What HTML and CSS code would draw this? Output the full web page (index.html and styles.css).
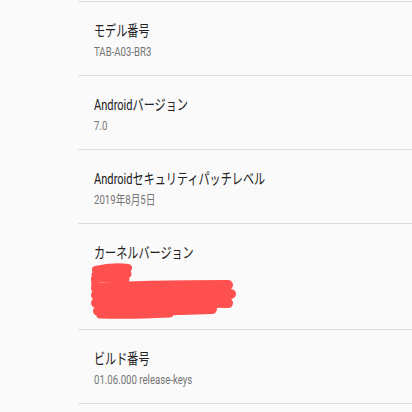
FILE: index.html
```html
<!DOCTYPE html>
<html lang="ja">
<head>
<meta charset="utf-8">
<link rel="stylesheet" href="styles.css">
</head>
<body>
<div class="list">
  <div class="row">
    <div class="title"><span>モデル番号</span></div>
    <div class="sub"><span>TAB-A03-BR3</span></div>
  </div>
  <div class="row">
    <div class="title"><span>Androidバージョン</span></div>
    <div class="sub"><span>7.0</span></div>
  </div>
  <div class="row">
    <div class="title"><span>Androidセキュリティパッチレベル</span></div>
    <div class="sub"><span>2019年8月5日</span></div>
  </div>
  <div class="row kernel">
    <div class="title"><span>カーネルバージョン</span></div>
    <svg class="scribble" width="146" height="60" viewBox="0 0 146 60">
      <g fill="none" stroke="#ff5050" stroke-linecap="round" stroke-linejoin="round">
        <path d="M6 7 C18 4 30 4 38 5" stroke-width="8"/>
        <path d="M5 12 L38 11 L6 16 L36 16" stroke-width="7"/>
        <path d="M5 16 L6 28" stroke-width="8"/>
        <path d="M6 25 C50 22 100 22 138 22" stroke-width="10"/>
        <path d="M6 32 C50 30 100 30 141 31" stroke-width="10"/>
        <path d="M6 40 C50 39 100 39 138 40" stroke-width="10"/>
        <path d="M8 48 C50 48 90 47 122 46" stroke-width="10"/>
        <path d="M10 52 C40 53 60 52 80 51" stroke-width="7"/>
      </g>
    </svg>
  </div>
  <div class="row last">
    <div class="title"><span>ビルド番号</span></div>
    <div class="sub"><span>01.06.000 release-keys</span></div>
  </div>
</div>
</body>
</html>
```

FILE: styles.css
```css
html, body {
  margin: 0;
  padding: 0;
  background: #fafafa;
}
body {
  padding-top: 1px;
  font-family: Roboto, "Noto Sans CJK JP", sans-serif;
}
.list {
  margin-left: 78px;
}
.row {
  border-top: 1px solid #dedede;
  height: 73px;
  box-sizing: content-box;
  padding-left: 16px;
}
.row.kernel {
  height: 105px;
}
.row.last {
  border-bottom: 1px solid #dedede;
}
.title {
  padding-top: 19px;
  font-size: 15px;
  line-height: 20px;
  color: #212121;
  white-space: nowrap;
}
.sub {
  margin-top: 3px;
  font-size: 13px;
  line-height: 16px;
  color: #757575;
  white-space: nowrap;
}
.title span, .sub span {
  display: inline-block;
  transform: scaleX(0.74);
  transform-origin: left center;
}
.scribble {
  display: block;
  margin-left: -4px;
  margin-top: 0;
}
```
